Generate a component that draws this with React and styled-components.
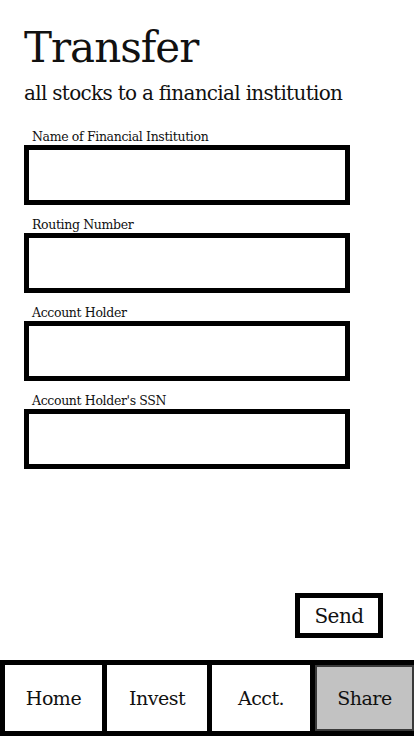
import React from "react";
import styled, { createGlobalStyle } from "styled-components";

const GlobalStyle = createGlobalStyle`
  html, body {
    margin: 0;
    padding: 0;
    background: #ffffff;
  }
  body {
    font-family: "DejaVu Serif", "Liberation Serif", serif;
    color: #111111;
  }
  * {
    box-sizing: border-box;
  }
`;

const fields = [
  "Name of Financial Institution",
  "Routing Number",
  "Account Holder",
  "Account Holder's SSN",
];

const tabs = ["Home", "Invest", "Acct.", "Share"];

export default function App() {
  return (
    <>
      <GlobalStyle />
      <Screen>
        <Content>
          <Title>Transfer</Title>
          <Subtitle>all stocks to a financial institution</Subtitle>
          <Form>
            {fields.map((f) => (
              <Field key={f}>
                <Label>{f}</Label>
                <Input type="text" aria-label={f} />
              </Field>
            ))}
          </Form>
          <Actions>
            <SendButton>Send</SendButton>
          </Actions>
        </Content>
        <NavBar>
          {tabs.map((t) => (
            <NavItem key={t} $active={t === "Share"}>
              {t}
            </NavItem>
          ))}
        </NavBar>
      </Screen>
    </>
  );
}

const Screen = styled.div`
  width: 414px;
  height: 736px;
  display: flex;
  flex-direction: column;
  overflow: hidden;
`;

const Content = styled.div`
  flex: 1;
  display: flex;
  flex-direction: column;
  padding: 24px 0 22px 24px;
`;

const Title = styled.h1`
  margin: 0;
  font-size: 42px;
  font-weight: 400;
  letter-spacing: -1px;
  line-height: 48px;
`;

const Subtitle = styled.div`
  margin-top: 8px;
  font-size: 20px;
  letter-spacing: -0.7px;
  line-height: 26px;
`;

const Form = styled.div`
  display: flex;
  flex-direction: column;
  gap: 12px;
  margin-top: 23px;
`;

const Field = styled.div`
  display: flex;
  flex-direction: column;
`;

const Label = styled.label`
  padding-left: 8px;
  font-size: 12.5px;
  letter-spacing: -0.35px;
  line-height: 16px;
`;

const Input = styled.input`
  width: 326px;
  height: 60px;
  border: 5px solid #000000;
  border-radius: 0;
  background: #ffffff;
  outline: none;
  font-family: inherit;
  font-size: 18px;
  padding: 0 10px;
`;

const Actions = styled.div`
  margin-top: auto;
  display: flex;
  justify-content: flex-end;
  padding-right: 31px;
`;

const SendButton = styled.button`
  width: 88px;
  height: 45px;
  border: 5px solid #000000;
  border-radius: 0;
  background: #ffffff;
  font-family: inherit;
  font-size: 20px;
  letter-spacing: -0.5px;
  color: #111111;
  padding: 0;
  cursor: pointer;
`;

const NavBar = styled.nav`
  height: 76px;
  display: grid;
  grid-template-columns: 97px 100px 98px 1fr;
  gap: 5px;
  background: #000000;
  border: 5px solid #000000;
  border-right: none;
`;

const NavItem = styled.button`
  border: ${(p) => (p.$active ? "2px solid #3a3a3a" : "none")};
  border-radius: 0;
  background: ${(p) => (p.$active ? "#c2c2c2" : "#ffffff")};
  font-family: inherit;
  font-size: 19px;
  letter-spacing: -0.5px;
  color: #111111;
  padding: 0;
  cursor: pointer;
`;
